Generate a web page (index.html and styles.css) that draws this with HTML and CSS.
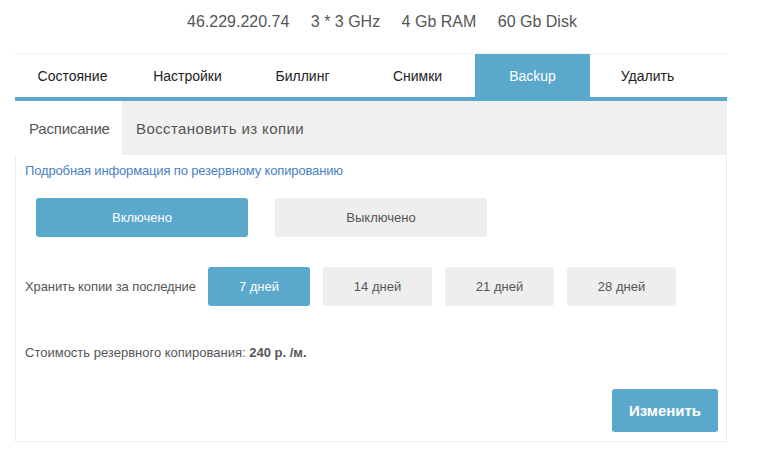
FILE: index.html
```html
<!DOCTYPE html>
<html lang="ru">
<head>
    <meta charset="UTF-8">
    <meta name="viewport" content="width=device-width, initial-scale=1.0">
    <title>Backup</title>
    <link rel="stylesheet" href="styles.css">
</head>
<body>
    <div class="server-info">
        <span>46.229.220.74</span>
        <span>3 * 3 GHz</span>
        <span>4 Gb RAM</span>
        <span>60 Gb Disk</span>
    </div>

    <div class="panel">
        <div class="tabs">
            <div class="tab">Состояние</div>
            <div class="tab">Настройки</div>
            <div class="tab">Биллинг</div>
            <div class="tab">Снимки</div>
            <div class="tab active">Backup</div>
            <div class="tab">Удалить</div>
        </div>

        <div class="subtabs">
            <div class="subtab active">Расписание</div>
            <div class="subtab restore">Восстановить из копии</div>
        </div>

        <div class="content">
            <a class="info-link" href="#">Подробная информация по резервному копированию</a>

            <div class="switch-row">
                <button type="button" class="btn btn-wide active">Включено</button>
                <button type="button" class="btn btn-wide">Выключено</button>
            </div>

            <div class="days-row">
                <span class="days-label">Хранить копии за последние</span>
                <button type="button" class="btn btn-day first active">7 дней</button>
                <button type="button" class="btn btn-day">14 дней</button>
                <button type="button" class="btn btn-day">21 дней</button>
                <button type="button" class="btn btn-day">28 дней</button>
            </div>

            <p class="cost">Стоимость резервного копирования: <strong>240 р. /м.</strong></p>

            <div class="actions">
                <button type="button" class="btn btn-save">Изменить</button>
            </div>
        </div>
    </div>
</body>
</html>
```

FILE: styles.css
```css
body {
    font-family: "Liberation Sans", Arial, sans-serif;
    margin: 0;
    padding: 0;
    background-color: #fff;
    color: #555;
}

.server-info {
    height: 53px;
    padding-left: 187px;
    box-sizing: border-box;
    padding-top: 13px;
    font-size: 16px;
    line-height: 18px;
    color: #555;
}

.server-info span {
    margin-right: 17px;
}

.panel {
    width: 712px;
    margin-left: 15px;
    border-top: 1px solid #f2f2f2;
}

.tabs {
    display: flex;
    height: 43px;
    border-bottom: 4px solid #5ba8cd;
}

.tab {
    width: 115px;
    display: flex;
    align-items: center;
    justify-content: center;
    font-size: 14px;
    color: #222;
}

.tab.active {
    background-color: #5ba8cd;
    color: #fff;
}

.subtabs {
    display: flex;
    height: 54px;
    background-color: #f0f0f0;
}

.subtab {
    display: flex;
    align-items: center;
    padding: 0 14px;
    font-size: 15px;
    color: #555;
}

.subtab.active {
    background-color: #fff;
    width: 107px;
    box-sizing: border-box;
    padding: 0 0 0 14px;
    letter-spacing: -0.2px;
}

.subtab.restore {
    letter-spacing: 0.4px;
}

.content {
    border: 1px solid #eee;
    border-top: none;
    padding: 8px 8px 8px 9px;
    height: 270px;
}

.info-link {
    display: block;
    font-size: 13px;
    line-height: 16px;
    color: #4a7fc4;
    text-decoration: none;
    letter-spacing: -0.15px;
}

.btn {
    font-family: "Liberation Sans", Arial, sans-serif;
    border: none;
    border-radius: 3px;
    background-color: #eee;
    color: #555;
    font-size: 13px;
    padding: 0;
    cursor: pointer;
}

.btn.active {
    background-color: #5ba8cd;
    color: #fff;
}

.switch-row {
    display: flex;
    gap: 27px;
    margin-top: 19px;
    padding-left: 11px;
}

.btn-wide {
    width: 212px;
    height: 39px;
}

.days-row {
    display: flex;
    align-items: center;
    margin-top: 30px;
}

.days-label {
    font-size: 13px;
    width: 183px;
    letter-spacing: -0.1px;
}

.btn-day {
    width: 109px;
    height: 39px;
    margin-left: 13px;
}

.btn-day.first {
    width: 102px;
    margin-left: 0;
}

.cost {
    font-size: 13px;
    line-height: 16px;
    margin: 39px 0 0 0;
}

.cost strong {
    color: #555;
}

.actions {
    display: flex;
    justify-content: flex-end;
    margin-top: 28px;
}

.btn-save {
    width: 106px;
    height: 43px;
    background-color: #5ba8cd;
    color: #fff;
    font-size: 15px;
    font-weight: bold;
}
```
